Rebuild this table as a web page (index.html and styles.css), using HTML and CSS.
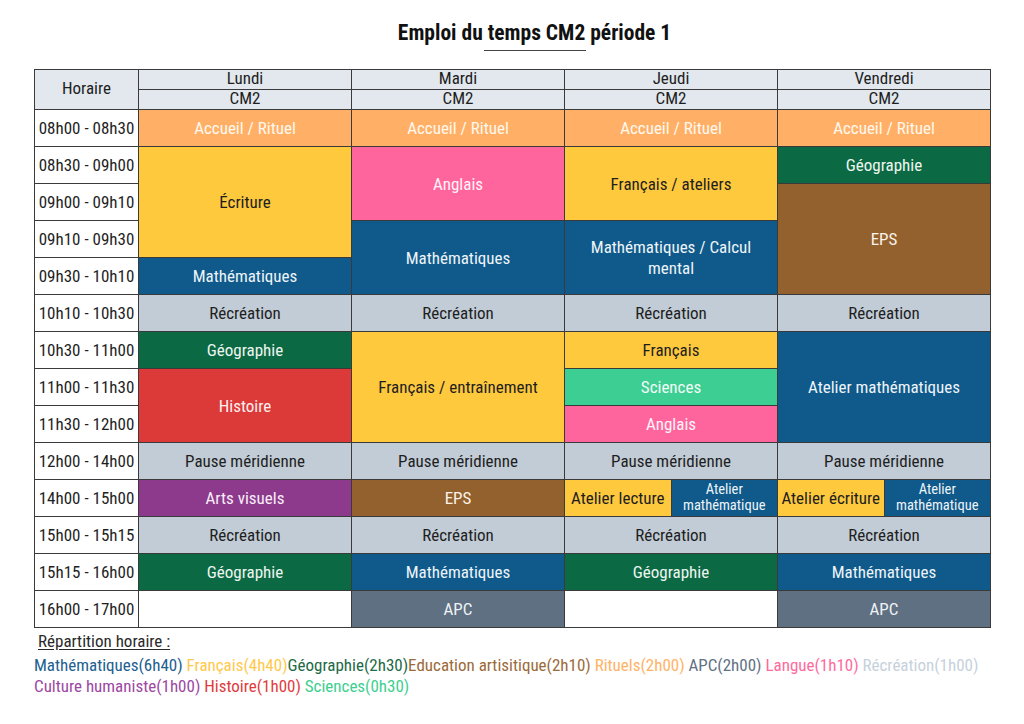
FILE: index.html
```html
<!DOCTYPE html>
<html lang="fr">
<head>
<meta charset="utf-8">
<title>Emploi du temps CM2 période 1</title>
<link rel="stylesheet" href="styles.css">
</head>
<body>
<div class="page">
  <header class="head">
    <h1 class="title">Emploi du temps CM2 période 1</h1>
    <div class="title-rule"></div>
  </header>

  <table class="edt">
    <colgroup>
      <col class="col-h">
      <col class="col-d">
      <col class="col-d">
      <col class="col-d">
      <col class="col-d">
    </colgroup>
    <thead>
      <tr class="hr">
        <th class="hd" rowspan="2">Horaire</th>
        <th class="hd">Lundi</th>
        <th class="hd">Mardi</th>
        <th class="hd">Jeudi</th>
        <th class="hd">Vendredi</th>
      </tr>
      <tr class="hr">
        <th class="hd">CM2</th>
        <th class="hd">CM2</th>
        <th class="hd">CM2</th>
        <th class="hd">CM2</th>
      </tr>
    </thead>
    <tbody>
      <tr>
        <td class="time">08h00 - 08h30</td>
        <td class="orange">Accueil / Rituel</td>
        <td class="orange">Accueil / Rituel</td>
        <td class="orange">Accueil / Rituel</td>
        <td class="orange">Accueil / Rituel</td>
      </tr>
      <tr>
        <td class="time">08h30 - 09h00</td>
        <td class="yellow" rowspan="3">Écriture</td>
        <td class="pink" rowspan="2">Anglais</td>
        <td class="yellow" rowspan="2">Français / ateliers</td>
        <td class="green">Géographie</td>
      </tr>
      <tr>
        <td class="time">09h00 - 09h10</td>
        <td class="brown" rowspan="3">EPS</td>
      </tr>
      <tr>
        <td class="time">09h10 - 09h30</td>
        <td class="blue" rowspan="2">Mathématiques</td>
        <td class="blue" rowspan="2"><span class="wrap">Mathématiques / Calcul mental</span></td>
      </tr>
      <tr>
        <td class="time">09h30 - 10h10</td>
        <td class="blue">Mathématiques</td>
      </tr>
      <tr>
        <td class="time">10h10 - 10h30</td>
        <td class="grey">Récréation</td>
        <td class="grey">Récréation</td>
        <td class="grey">Récréation</td>
        <td class="grey">Récréation</td>
      </tr>
      <tr>
        <td class="time">10h30 - 11h00</td>
        <td class="green">Géographie</td>
        <td class="yellow" rowspan="3">Français / entraînement</td>
        <td class="yellow">Français</td>
        <td class="blue" rowspan="3">Atelier mathématiques</td>
      </tr>
      <tr>
        <td class="time">11h00 - 11h30</td>
        <td class="red" rowspan="2">Histoire</td>
        <td class="teal">Sciences</td>
      </tr>
      <tr>
        <td class="time">11h30 - 12h00</td>
        <td class="pink">Anglais</td>
      </tr>
      <tr>
        <td class="time">12h00 - 14h00</td>
        <td class="grey">Pause méridienne</td>
        <td class="grey">Pause méridienne</td>
        <td class="grey">Pause méridienne</td>
        <td class="grey">Pause méridienne</td>
      </tr>
      <tr>
        <td class="time">14h00 - 15h00</td>
        <td class="purple">Arts visuels</td>
        <td class="brown">EPS</td>
        <td class="split">
          <div class="halves">
            <div class="half yellow">Atelier lecture</div>
            <div class="half blue small">Atelier<br>mathématique</div>
          </div>
        </td>
        <td class="split">
          <div class="halves">
            <div class="half yellow">Atelier écriture</div>
            <div class="half blue small">Atelier<br>mathématique</div>
          </div>
        </td>
      </tr>
      <tr>
        <td class="time">15h00 - 15h15</td>
        <td class="grey">Récréation</td>
        <td class="grey">Récréation</td>
        <td class="grey">Récréation</td>
        <td class="grey">Récréation</td>
      </tr>
      <tr>
        <td class="time">15h15 - 16h00</td>
        <td class="green">Géographie</td>
        <td class="blue">Mathématiques</td>
        <td class="green">Géographie</td>
        <td class="blue">Mathématiques</td>
      </tr>
      <tr>
        <td class="time">16h00 - 17h00</td>
        <td class="empty"></td>
        <td class="slate">APC</td>
        <td class="empty"></td>
        <td class="slate">APC</td>
      </tr>
    </tbody>
  </table>

  <section class="legend">
    <div class="legend-title">Répartition horaire :</div>
    <div class="legend-line">
      <span class="l-math">Mathématiques(6h40)</span> <span class="l-fr">Français(4h40)</span><span class="l-geo">Géographie(2h30)</span><span class="l-art">Education artisitique(2h10)</span> <span class="l-rit">Rituels(2h00)</span> <span class="l-apc">APC(2h00)</span> <span class="l-lang">Langue(1h10)</span> <span class="l-rec">Récréation(1h00)</span>
    </div>
    <div class="legend-line">
      <span class="l-cult">Culture humaniste(1h00)</span> <span class="l-hist">Histoire(1h00)</span> <span class="l-sci">Sciences(0h30)</span>
    </div>
  </section>
</div>
</body>
</html>
```

FILE: styles.css
```css
* { box-sizing: border-box; }

html, body {
  margin: 0;
  padding: 0;
  background: #ffffff;
}

body {
  font-family: "Roboto Condensed", Roboto, "Liberation Sans", sans-serif;
  color: #1e1e1e;
  width: 1024px;
  height: 724px;
  overflow: hidden;
}

.page {
  padding: 19px 0 0 34px;
}

.head {
  width: 957px;
  padding-left: 44px;
  display: flex;
  flex-direction: column;
  align-items: center;
}

.title {
  margin: 0;
  font-size: 21.5px;
  font-weight: 700;
  line-height: 28px;
  color: #111111;
}

.title-rule {
  width: 102px;
  height: 1px;
  background: #444444;
  margin-top: 3px;
}

.edt {
  margin-top: 18px;
  border-collapse: collapse;
  table-layout: fixed;
  width: 957px;
  border: 1px solid #3a3a3a;
  font-size: 17px;
}

.col-h { width: 104px; }
.col-d { width: 213px; }

.edt th,
.edt td {
  border: 1px solid #3a3a3a;
  padding: 0;
  text-align: center;
  vertical-align: middle;
  font-weight: 400;
  line-height: 18px;
}

.hr th {
  height: 20px;
  line-height: 17px;
  padding-bottom: 2px;
}

.hd {
  background: #e2e8ee;
  color: #1e1e1e;
}

.edt tbody td { height: 37px; }

.time {
  background: #ffffff;
  color: #1e1e1e;
}

.orange { background: #ffb066; color: #fff8ef; }
.yellow { background: #ffc93e; color: #1e1e1e; }
.pink   { background: #ff659d; color: #fff4f8; }
.blue   { background: #0f5a8a; color: #eef4f9; }
.green  { background: #0b6a43; color: #eef6f1; }
.brown  { background: #93612d; color: #fbf3ea; }
.grey   { background: #c1ccd6; color: #1e1e1e; }
.red    { background: #dc3939; color: #fdf0f0; }
.purple { background: #8d3a8c; color: #f9eef9; }
.teal   { background: #3dce93; color: #f2fcf7; }
.slate  { background: #5e7081; color: #eef2f5; }
.empty  { background: #ffffff; }

.wrap {
  display: inline-block;
  max-width: 175px;
  line-height: 21px;
}

.split { padding: 0; }

.halves {
  display: flex;
  height: 36px;
}

.half {
  flex: 1 1 0;
  display: flex;
  align-items: center;
  justify-content: center;
  text-align: center;
}

.half + .half { border-left: 1px solid #3a3a3a; }

.small {
  font-size: 14.5px;
  line-height: 16px;
}

.legend {
  padding-top: 2px;
  font-size: 17px;
}

.legend-title {
  padding-left: 4px;
  color: #2a2a2a;
  text-decoration: underline;
  text-underline-offset: 2px;
  line-height: 22px;
}

.legend-line {
  line-height: 21px;
  white-space: nowrap;
}

.legend-title + .legend-line { margin-top: 3px; }

.l-math { color: #21608f; }
.l-fr   { color: #ffc94c; }
.l-geo  { color: #1d6a46; }
.l-art  { color: #9b6a3b; }
.l-rit  { color: #ffb366; }
.l-apc  { color: #5f7182; }
.l-lang { color: #ff6a9d; }
.l-rec  { color: #c6d1dc; }
.l-cult { color: #9c47a2; }
.l-hist { color: #e03b3d; }
.l-sci  { color: #3dcf8f; }
```
